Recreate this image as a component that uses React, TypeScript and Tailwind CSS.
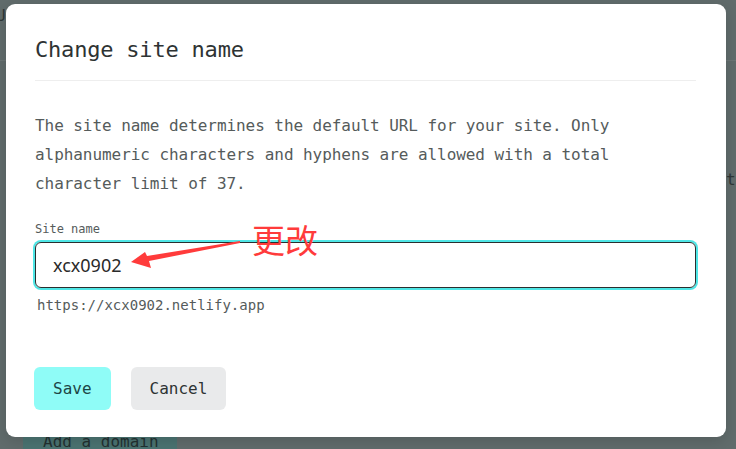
import React from "react";

const mono = { fontFamily: '"DejaVu Sans Mono", "Liberation Mono", monospace' };

export default function App() {
  return (
    <div className="relative w-[736px] h-[449px] overflow-hidden bg-[#616c6c]" style={mono}>
      {/* background page remnants */}
      <div className="absolute left-[-4px] top-[6px] text-[16px] leading-[20px] text-[#2f3737]">Us</div>
      <div className="absolute left-0 top-[60px] w-[736px] h-px bg-[#6c7676]" />
      <div className="absolute left-[726px] top-[170px] text-[16px] leading-[20px] text-[#2f3737]">to</div>
      <div className="absolute left-[23px] top-[424px] w-[154px] h-[40px] bg-[#4b7472] pl-[20px] pt-[8px] text-[16px] leading-[20px] text-[#233131]">
        Add a domain
      </div>

      {/* modal */}
      <div className="absolute left-[6px] top-[4px] w-[720px] h-[433px] bg-white rounded-[9px] shadow-[0_4px_16px_rgba(0,0,0,0.15)] pl-[29px] pr-[30px] pt-[31px] flex flex-col">
        <h2 className="text-[22px] leading-[30px] text-[#2e3333] tracking-[-0.2px]">Change site name</h2>
        <div className="mt-[15px] h-px bg-[#eeeeee]" />
        <p className="mt-[30px] text-[16px] leading-[29px] text-[#555b5b] tracking-[-0.06px]">
          The site name determines the default URL for your site. Only
          <br />
          alphanumeric characters and hyphens are allowed with a total
          <br />
          character limit of 37.
        </p>
        <div className="mt-[23px] text-[12px] leading-[16px] text-[#555b5b]">Site name</div>
        <div className="mt-[5px] h-[46px] rounded-[6px] border border-[#2a2f2f] shadow-[0_0_0_2px_#4fe6e6] flex items-center pl-[17px]">
          <span className="text-[18px] text-[#2a2a2a]" style={{ fontFamily: '"Noto Sans", "Open Sans", sans-serif' }}>
            xcx0902
          </span>
        </div>
        <div className="mt-[7px] pl-[2px] text-[14px] leading-[20px] text-[#555b5b]">https://xcx0902.netlify.app</div>
        <div className="mt-[52px] -ml-px flex gap-[20px]">
          <button className="h-[43px] px-[19px] rounded-[6px] bg-[#8ffcf7] text-[16px] text-[#1d4646]">Save</button>
          <button className="h-[43px] px-[19px] rounded-[6px] bg-[#e9eaeb] text-[16px] text-[#2e3333]">Cancel</button>
        </div>
      </div>

      {/* annotation */}
      <svg className="absolute left-0 top-0" width="736" height="449" viewBox="0 0 736 449">
        <polygon points="131,262 145,252 147,256 240,241 240,243 149,261 151,268" fill="#ff3b3b" />
      </svg>
      <div
        className="absolute left-[252px] top-[221px] text-[33px] leading-[36px] text-[#ff3b3b]"
        style={{ fontFamily: '"Noto Sans CJK SC", sans-serif' }}
      >
        更改
      </div>
    </div>
  );
}
